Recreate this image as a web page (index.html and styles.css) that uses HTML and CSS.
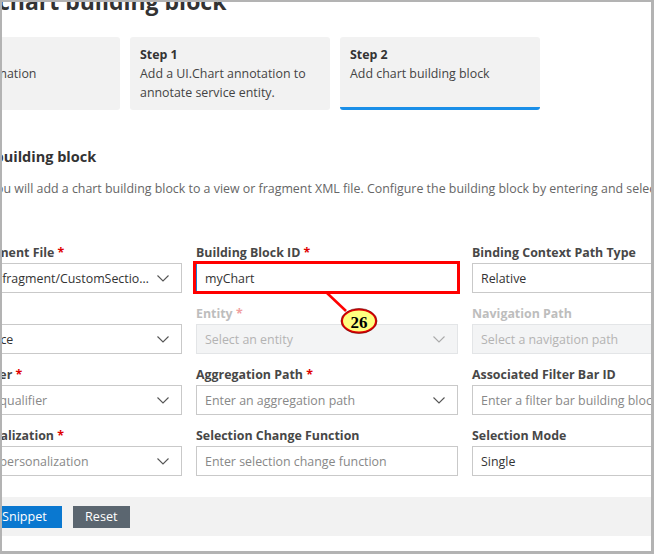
FILE: index.html
```html
<!DOCTYPE html>
<html>
<head>
<meta charset="utf-8">
<link rel="stylesheet" href="styles.css">
</head>
<body>
<div class="frame">
  <div class="page">
    <h1 class="title">Add chart building block</h1>
    <div class="steps">
      <div class="step">
        <div class="step-title">Step 0</div>
        <div class="step-desc">Basic information</div>
      </div>
      <div class="step">
        <div class="step-title">Step 1</div>
        <div class="step-desc">Add a UI.Chart annotation to annotate service entity.</div>
      </div>
      <div class="step active">
        <div class="step-title">Step 2</div>
        <div class="step-desc">Add chart building block</div>
      </div>
    </div>

    <h2 class="section-title">Add chart building block</h2>
    <p class="section-desc">In this step, you will add a chart building block to a view or fragment XML file. Configure the building block by entering and selecting the values below.</p>

    <div class="form">
      <div class="field">
        <div class="label">View or Fragment File <span class="req">*</span></div>
        <div class="input select"><span class="val">webapp/ext/fragment/CustomSection.fragment.xml</span><svg class="chev" viewBox="0 0 12 7"><path d="M0.5 0.5 L6 6 L11.5 0.5"/></svg></div>
      </div>
      <div class="field">
        <div class="label">Building Block ID <span class="req">*</span></div>
        <div class="input focus"><span class="val">myChart</span></div>
      </div>
      <div class="field">
        <div class="label">Binding Context Path Type</div>
        <div class="input"><span class="val">Relative</span></div>
      </div>

      <div class="field">
        <div class="label">Service</div>
        <div class="input select"><span class="val">CatalogService</span><svg class="chev" viewBox="0 0 12 7"><path d="M0.5 0.5 L6 6 L11.5 0.5"/></svg></div>
      </div>
      <div class="field disabled">
        <div class="label">Entity <span class="req">*</span></div>
        <div class="input select"><span class="ph">Select an entity</span><svg class="chev" viewBox="0 0 12 7"><path d="M0.5 0.5 L6 6 L11.5 0.5"/></svg></div>
      </div>
      <div class="field disabled">
        <div class="label">Navigation Path</div>
        <div class="input select"><span class="ph">Select a navigation path</span></div>
      </div>

      <div class="field">
        <div class="label">Chart Qualifier <span class="req">*</span></div>
        <div class="input select"><span class="ph">Select chart qualifier</span><svg class="chev" viewBox="0 0 12 7"><path d="M0.5 0.5 L6 6 L11.5 0.5"/></svg></div>
      </div>
      <div class="field">
        <div class="label">Aggregation Path <span class="req">*</span></div>
        <div class="input select"><span class="ph">Enter an aggregation path</span><svg class="chev" viewBox="0 0 12 7"><path d="M0.5 0.5 L6 6 L11.5 0.5"/></svg></div>
      </div>
      <div class="field">
        <div class="label">Associated Filter Bar ID</div>
        <div class="input"><span class="ph">Enter a filter bar building block ID</span></div>
      </div>

      <div class="field">
        <div class="label">Chart Personalization <span class="req">*</span></div>
        <div class="input select"><span class="ph">Select chart personalization</span><svg class="chev" viewBox="0 0 12 7"><path d="M0.5 0.5 L6 6 L11.5 0.5"/></svg></div>
      </div>
      <div class="field">
        <div class="label">Selection Change Function</div>
        <div class="input"><span class="ph">Enter selection change function</span></div>
      </div>
      <div class="field">
        <div class="label">Selection Mode</div>
        <div class="input"><span class="val">Single</span></div>
      </div>
    </div>
  </div>

  <div class="footer">
    <button class="btn primary">Snippet</button>
    <button class="btn secondary">Reset</button>
  </div>

  <svg class="callout" width="654" height="554" viewBox="0 0 654 554">
    <rect x="194.5" y="262.5" width="264" height="30" fill="none" stroke="#ff0000" stroke-width="3"/>
    <line x1="327" y1="293" x2="346" y2="311" stroke="#ff0000" stroke-width="2.5"/>
    <ellipse cx="359" cy="321" rx="17" ry="11.5" fill="#ffff80" stroke="#e00000" stroke-width="2"/>
    <ellipse cx="359" cy="321" rx="18" ry="12.5" fill="none" stroke="#600000" stroke-width="0.6"/>
    <text x="359" y="327.5" text-anchor="middle" class="badge-text">26</text>
  </svg>
</div>
</body>
</html>
```

FILE: styles.css
```css
* { box-sizing: border-box; }
html, body { margin: 0; padding: 0; background: #fff; }
body {
  width: 654px;
  height: 554px;
  overflow: hidden;
  font-family: "Open Sans", "Noto Sans", sans-serif;
}
.frame {
  position: relative;
  width: 654px;
  height: 554px;
  border-style: solid;
  border-color: #b3b3b3;
  border-width: 2px 3px 3px 2px;
  overflow: hidden;
  background: #fff;
}
.page {
  margin-left: -82px;
  width: 900px;
}
.title {
  margin: -16px 0 0 27px;
  font-size: 23px;
  line-height: 30px;
  font-weight: 700;
  color: #333;
}
.steps {
  display: flex;
  gap: 10px;
  margin-top: 21px;
}
.step {
  width: 200px;
  height: 73px;
  background: #f2f2f2;
  border-radius: 3px;
  padding: 8px 10px 0;
  font-size: 12.4px;
  line-height: 19px;
  color: #444;
}
.step:first-child .step-desc { margin-left: 5px; }
.step.active {
  border-bottom: 3px solid #1a8fe8;
}
.step-title {
  font-weight: 700;
  color: #333;
}
.section-title {
  margin: 36px 0 0;
  font-size: 14.5px;
  line-height: 22px;
  font-weight: 700;
  color: #333;
}
.section-desc {
  margin: 11px 0 0;
  font-size: 12.4px;
  line-height: 19px;
  color: #666;
  width: 820px;
}
.form {
  margin-top: 27px;
  display: grid;
  grid-template-columns: 262px 262px 262px;
  column-gap: 14px;
  row-gap: 12px;
}
.label {
  font-size: 12.4px;
  line-height: 18px;
  font-weight: 700;
  color: #474747;
  margin-bottom: 1px;
  white-space: nowrap;
}
.req { color: #e00000; }
.input {
  height: 30px;
  border: 1px solid #c9c9c9;
  background: #fff;
  display: flex;
  align-items: center;
  padding: 0 8px;
  font-size: 12.4px;
  white-space: nowrap;
  overflow: hidden;
}
.input .val { color: #333; flex: 1; overflow: hidden; text-overflow: ellipsis; }
.input .ph { color: #888; flex: 1; overflow: hidden; }
.input.focus { border-color: #1a7fd4; }
.chev {
  width: 12px;
  height: 7px;
  flex: none;
  margin-left: 8px;
  margin-right: 4px;
}
.chev path { fill: none; stroke: #555; stroke-width: 1.1; }
.disabled .label { color: #bdbdbd; }
.disabled .req { color: #f0a0a0; }
.disabled .input { background: #f3f4f5; border-color: #e3e5e7; }
.disabled .input .ph { color: #b3b3b3; }
.disabled .chev path { stroke: #aaa; }
.footer {
  margin-top: 21px;
  height: 39px;
  background: #f2f2f2;
  display: flex;
  align-items: center;
  gap: 11px;
  margin-left: -19px;
}
.btn {
  font-family: "Open Sans", "Noto Sans", sans-serif;
  font-size: 12.6px;
  height: 22px;
  border: none;
  border-radius: 0;
  color: #fff;
  padding: 0 14px;
  line-height: 22px;
}
.btn.primary { background: #0a78d0; padding-left: 19px; padding-right: 15px; }
.btn.secondary { background: #5b6670; width: 57px; padding: 0; }
.callout {
  position: absolute;
  left: -2px;
  top: -2px;
  pointer-events: none;
}
.badge-text {
  font-family: "Liberation Serif", "DejaVu Serif", serif;
  font-weight: 700;
  font-size: 17px;
  fill: #000;
}
```
